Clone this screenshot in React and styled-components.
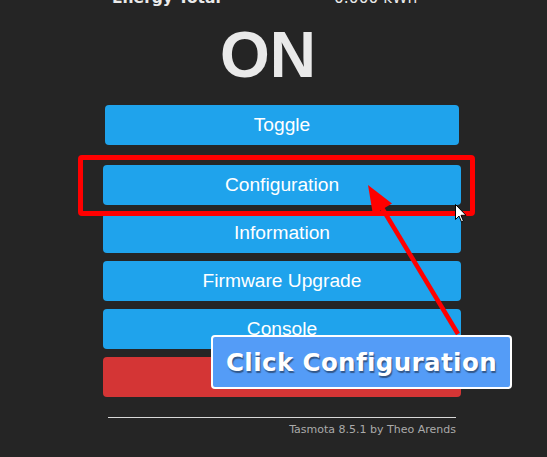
import React from "react";
import styled, { createGlobalStyle } from "styled-components";

const GlobalStyle = createGlobalStyle`
  html, body {
    margin: 0;
    padding: 0;
    background: #252525;
    overflow: hidden;
  }
`;

const Screen = styled.div`
  position: relative;
  width: 547px;
  height: 457px;
  overflow: hidden;
  background: #252525;
  color: #eaeaea;
`;

const Page = styled.div`
  width: 358px;
  margin-left: 103px;
  display: flex;
  flex-direction: column;
`;

const SensorRow = styled.div`
  display: flex;
  margin-top: -11px;
  padding-left: 9px;
  font-family: "DejaVu Sans", Verdana, sans-serif;
  font-size: 15.5px;
  line-height: 18px;
  white-space: nowrap;
`;

const SensorLabel = styled.span`
  font-weight: bold;
  width: 222px;
`;

const SensorValue = styled.span`
  font-weight: normal;
`;

const State = styled.div`
  margin-top: 13px;
  padding-right: 28px;
  text-align: center;
  font-family: "Liberation Sans", Arial, sans-serif;
  font-weight: bold;
  font-size: 64px;
  line-height: 70px;
  color: #eaeaea;
`;

const Buttons = styled.div`
  margin-top: 15px;
  display: flex;
  flex-direction: column;
  gap: 8px;
`;

const Button = styled.div`
  height: 40px;
  margin: ${(p) => (p.$inset ? "0 2px 12px" : "0")};
  border-radius: 4px;
  background: ${(p) => (p.$danger ? "#d43535" : "#1fa3ec")};
  color: #fff;
  display: flex;
  align-items: center;
  justify-content: center;
  font-family: "Liberation Sans", Arial, sans-serif;
  font-size: 19.2px;
`;

const Rule = styled.div`
  margin: 20px 5px 0;
  height: 1px;
  background: #d8d8d8;
`;

const Footer = styled.div`
  margin: 5px 5px 0;
  text-align: right;
  font-family: "DejaVu Sans", Verdana, sans-serif;
  font-size: 11px;
  line-height: 14px;
  color: #aaa;
`;

const Highlight = styled.div`
  position: absolute;
  left: 78px;
  top: 155px;
  width: 387px;
  height: 51px;
  border: 5px solid #ff0000;
  border-radius: 4px;
`;

const Overlay = styled.svg`
  position: absolute;
  left: 0;
  top: 0;
  pointer-events: none;
`;

const Callout = styled.div`
  position: absolute;
  left: 211px;
  top: 335px;
  width: 297px;
  height: 50px;
  border: 2px solid #fff;
  border-radius: 4px;
  background: #549cf7;
  display: flex;
  align-items: center;
  justify-content: center;
  color: #fff;
  font-family: "DejaVu Sans", Verdana, sans-serif;
  font-weight: bold;
  font-size: 24.5px;
  letter-spacing: 0.4px;
  text-shadow: 1px 1.5px 1px rgba(30, 50, 80, 0.65);
`;

const Cursor = styled.svg`
  position: absolute;
  left: 455px;
  top: 204px;
`;

export default function App() {
  const buttons = ["Configuration", "Information", "Firmware Upgrade", "Console"];
  return (
    <Screen>
      <GlobalStyle />
      <Page>
        <SensorRow>
          <SensorLabel>Energy Total</SensorLabel>
          <SensorValue>0.000 kWh</SensorValue>
        </SensorRow>
        <State>ON</State>
        <Buttons>
          <Button $inset>Toggle</Button>
          {buttons.map((b) => (
            <Button key={b}>{b}</Button>
          ))}
          <Button $danger />
        </Buttons>
        <Rule />
        <Footer>Tasmota 8.5.1 by Theo Arends</Footer>
      </Page>

      <Highlight />
      <Overlay width="547" height="457" viewBox="0 0 547 457">
        <line x1="458" y1="334" x2="379" y2="203" stroke="#ff0000" strokeWidth="4.5" />
        <polygon points="368,185 392,203.5 373,215" fill="#ff0000" />
      </Overlay>
      <Callout>Click Configuration</Callout>
      <Cursor width="12" height="19" viewBox="0 0 12 19">
        <path
          d="M0.5 0.5 L0.5 15.5 L4 12 L6.5 18 L8.5 17.2 L6 11.3 L11 11.3 Z"
          fill="#fff"
          stroke="#000"
          strokeWidth="1"
          strokeLinejoin="round"
        />
      </Cursor>
    </Screen>
  );
}
